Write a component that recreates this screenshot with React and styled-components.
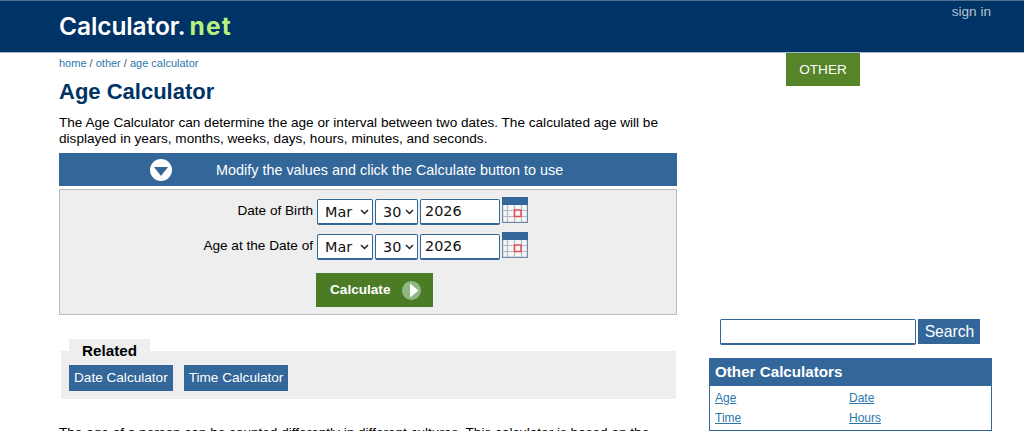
import styled, { createGlobalStyle } from "styled-components";

const GlobalStyle = createGlobalStyle`
  html, body {
    margin: 0;
    padding: 0;
    height: 431px;
    overflow: hidden;
    background: #fff;
    font-family: "Liberation Sans", Arial, sans-serif;
    font-size: 13.6px;
    color: #000;
  }
`;

const Header = styled.header`
  height: 51px;
  background: #003366;
  border-top: 1px solid #517095;
  border-bottom: 1px solid #a3b5c9;
  display: flex;
  justify-content: space-between;
  padding: 0 33px 0 59px;
`;

const Logo = styled.a`
  font-family: Inter, "Liberation Sans", sans-serif;
  font-size: 24.5px;
  font-weight: 600;
  letter-spacing: -0.1px;
  line-height: 50px;
  color: #fff;
  white-space: nowrap;

  span {
    color: #b7f27f;
    font-weight: 700;
    letter-spacing: 1.2px;
    margin-left: 4px;
  }
`;

const SignIn = styled.a`
  line-height: 21px;
  color: #b8c4d2;
`;

const Page = styled.div`
  display: grid;
  grid-template-columns: 618px 283px;
  column-gap: 32px;
  padding-left: 59px;
`;

const Main = styled.main``;

const Crumbs = styled.div`
  font-size: 11px;
  line-height: 14px;
  padding-top: 3px;
  color: #555;

  a {
    color: #2b78ad;
  }
`;

const Title = styled.h1`
  margin: 8px 0 0;
  font-size: 22px;
  line-height: 28px;
  font-weight: 700;
  color: #003366;
`;

const Intro = styled.p`
  margin: 9px 0 0;
  line-height: 16px;
`;

const Banner = styled.div`
  margin-top: 6px;
  height: 33px;
  padding-left: 91px;
  box-sizing: border-box;
  background: #336699;
  color: #fff;
  font-size: 14.4px;
  display: flex;
  align-items: center;
  gap: 44px;
`;

const FormBox = styled.section`
  margin-top: 3px;
  height: 124px;
  background: #eeeeee;
  border: 1px solid #bbbbbb;
  display: flex;
  flex-direction: column;
`;

const FormRows = styled.div`
  display: grid;
  grid-template-columns: 253px auto;
  column-gap: 4px;
  row-gap: 9px;
  padding-top: 9px;
  align-items: start;
`;

const Label = styled.label`
  text-align: right;
  line-height: 24px;
`;

const Fields = styled.div`
  display: flex;
  height: 26px;
`;

const Select = styled.div`
  box-sizing: border-box;
  width: ${(p) => p.$width}px;
  height: 26px;
  margin-right: 2px;
  padding: 0 3px 0 7px;
  background: #fff;
  border: 1px solid #336699;
  border-bottom-width: 2px;
  border-radius: 2px;
  font-family: "DejaVu Sans", sans-serif;
  font-size: 14.4px;
  display: flex;
  align-items: center;
  justify-content: space-between;
  color: #111;
`;

const DateInput = styled.div`
  box-sizing: border-box;
  width: 80px;
  height: 26px;
  padding-left: 4px;
  background: #fff;
  border: 1px solid #336699;
  border-bottom-width: 2px;
  border-radius: 2px;
  font-family: "DejaVu Sans", sans-serif;
  font-size: 14.4px;
  line-height: 23px;
  color: #111;
`;

const CalendarWrap = styled.span`
  margin: -2px 0 0 2px;
  display: flex;
`;

const CalcButton = styled.button`
  align-self: flex-start;
  margin: 13px 0 0 256px;
  width: 117px;
  height: 34px;
  border: 0;
  background: #4c7b25;
  color: #fff;
  font-family: inherit;
  font-size: 13.6px;
  font-weight: 700;
  display: flex;
  align-items: center;
  gap: 12px;
  padding: 0 0 0 14px;

  span {
    position: relative;
    top: -1px;
  }
`;

const Related = styled.section`
  margin-top: 24px;
  margin-left: 2px;
`;

const RelatedTab = styled.div`
  width: 81px;
  height: 12px;
  margin-left: 8px;
  background: #eeeeee;
  font-size: 15.2px;
  font-weight: 700;
  line-height: 24px;
  text-align: center;
  position: relative;
`;

const RelatedBody = styled.div`
  height: 48px;
  width: 615px;
  background: #eeeeee;
  padding: 14px 0 0 8px;
  box-sizing: border-box;
  display: flex;
  gap: 11px;
`;

const Chip = styled.a`
  height: 26px;
  line-height: 26px;
  padding: 0 5px;
  background: #336699;
  color: #fff;
`;

const Body = styled.p`
  margin: 26px 0 0;
  line-height: 16px;
`;

const Aside = styled.aside`
  display: flex;
  flex-direction: column;
`;

const AdTag = styled.div`
  align-self: flex-start;
  margin-left: 77px;
  width: 74px;
  height: 33px;
  background: #568428;
  color: #fff;
  line-height: 33px;
  text-align: center;
`;

const SearchRow = styled.form`
  margin-top: 233px;
  margin-left: 11px;
  display: flex;
  gap: 2px;
`;

const SearchInput = styled.div`
  box-sizing: border-box;
  width: 196px;
  height: 26px;
  background: #fff;
  border: 1px solid #336699;
  border-bottom-width: 2px;
  border-radius: 2px;
`;

const SearchButton = styled.button`
  width: 62px;
  height: 25px;
  border: 0;
  padding: 0 0 0 1px;
  background: #336699;
  color: #fff;
  font-family: inherit;
  font-size: 15.7px;
`;

const SideBox = styled.div`
  margin-top: 13px;
  border: 1px solid #336699;
  border-top: 0;
  width: 283px;
  box-sizing: border-box;
`;

const SideTitle = styled.div`
  background: #336699;
  color: #fff;
  margin: 0 -1px;
  height: 28px;
  line-height: 27px;
  padding-left: 6px;
  font-size: 15.2px;
  font-weight: 700;
`;

const LinkGrid = styled.div`
  display: grid;
  grid-template-columns: 134px 1fr;
  row-gap: 4px;
  padding: 4px 5px;

  a {
    font-size: 12px;
    line-height: 16px;
    color: #2b78ad;
    text-decoration: underline;
  }
`;

function Chevron() {
  return (
    <svg width="9" height="6" viewBox="0 0 9 6" fill="none">
      <path d="M1 1l3.5 3.5L8 1" stroke="#222" strokeWidth="1.5" />
    </svg>
  );
}

function Calendar() {
  return (
    <svg width="26" height="26" viewBox="0 0 26 26">
      <rect x="0.5" y="0.5" width="25" height="25" fill="#f7f7f7" stroke="#6f88a8" strokeWidth="1.4" />
      <rect x="0" y="0" width="26" height="8" fill="#336699" />
      <path d="M5.5 8v17M12.5 8v17M19.5 8v17M1 13.5h24M1 19.5h24" stroke="#b4bac2" strokeWidth="1.2" />
      <rect x="12.5" y="13" width="6.5" height="6.5" fill="#f7f7f7" stroke="#ea4a55" strokeWidth="1.5" />
    </svg>
  );
}

function DateRow({ label }) {
  return (
    <>
      <Label>{label}</Label>
      <Fields>
        <Select $width={56}>
          Mar <Chevron />
        </Select>
        <Select $width={43}>
          30 <Chevron />
        </Select>
        <DateInput>2026</DateInput>
        <CalendarWrap>
          <Calendar />
        </CalendarWrap>
      </Fields>
    </>
  );
}

export default function App() {
  return (
    <>
      <GlobalStyle />
      <Header>
        <Logo>
          Calculator.<span>net</span>
        </Logo>
        <SignIn>sign in</SignIn>
      </Header>
      <Page>
        <Main>
          <Crumbs>
            <a>home</a> / <a>other</a> / <a>age calculator</a>
          </Crumbs>
          <Title>Age Calculator</Title>
          <Intro>
            The Age Calculator can determine the age or interval between two dates. The calculated
            age will be displayed in years, months, weeks, days, hours, minutes, and seconds.
          </Intro>
          <Banner>
            <svg width="22" height="22" viewBox="0 0 22 22">
              <circle cx="11" cy="11" r="11" fill="#fff" />
              <path d="M4 8h14l-7 9z" fill="#336699" />
            </svg>
            <span>Modify the values and click the Calculate button to use</span>
          </Banner>
          <FormBox>
            <FormRows>
              <DateRow label="Date of Birth" />
              <DateRow label="Age at the Date of" />
            </FormRows>
            <CalcButton>
              <span>Calculate</span>
              <svg width="19" height="19" viewBox="0 0 19 19">
                <circle cx="9.5" cy="9.5" r="9.5" fill="#8fb784" />
                <path d="M8 2.5l8.5 7-8.5 7z" fill="#fff" />
              </svg>
            </CalcButton>
          </FormBox>
          <Related>
            <RelatedTab>Related</RelatedTab>
            <RelatedBody>
              <Chip>Date Calculator</Chip>
              <Chip>Time Calculator</Chip>
            </RelatedBody>
          </Related>
          <Body>
            The age of a person can be counted differently in different cultures. This calculator is
            based on the most common age system.
          </Body>
        </Main>
        <Aside>
          <AdTag>OTHER</AdTag>
          <SearchRow>
            <SearchInput />
            <SearchButton type="button">Search</SearchButton>
          </SearchRow>
          <SideBox>
            <SideTitle>Other Calculators</SideTitle>
            <LinkGrid>
              <a>Age</a>
              <a>Date</a>
              <a>Time</a>
              <a>Hours</a>
            </LinkGrid>
          </SideBox>
        </Aside>
      </Page>
    </>
  );
}
